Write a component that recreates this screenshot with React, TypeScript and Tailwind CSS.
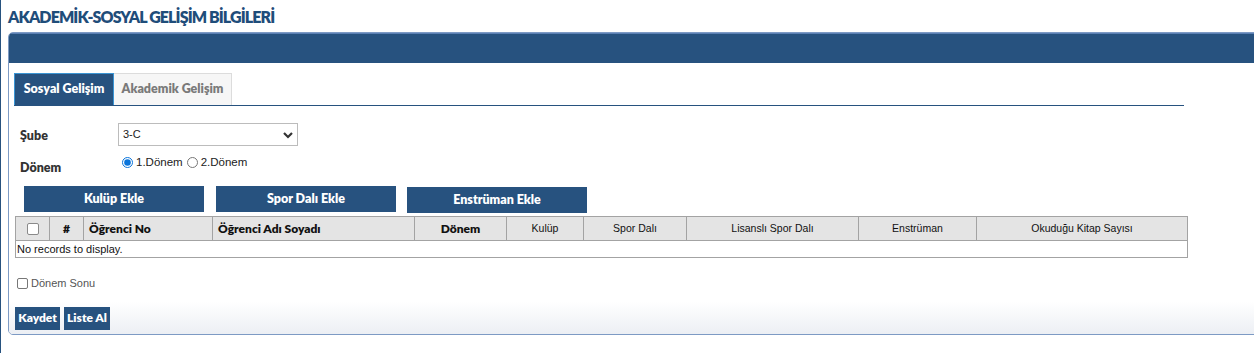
const cols = [
  { label: '#', w: 34, bold: true, align: 'center' },
  { label: 'Öğrenci No', w: 129, bold: true, align: 'left' },
  { label: 'Öğrenci Adı Soyadı', w: 202, bold: true, align: 'left' },
  { label: 'Dönem', w: 92, bold: true, align: 'center' },
  { label: 'Kulüp', w: 77, bold: false, align: 'center' },
  { label: 'Spor Dalı', w: 103, bold: false, align: 'center' },
  { label: 'Lisanslı Spor Dalı', w: 172, bold: false, align: 'center' },
  { label: 'Enstrüman', w: 118, bold: false, align: 'center' },
  { label: 'Okuduğu Kitap Sayısı', w: 211, bold: false, align: 'center' },
]

const head = { fontFamily: '"Lato", "Noto Sans", sans-serif' }
const body = { fontFamily: '"Liberation Sans", Arial, sans-serif' }

function ActionButton({ children }: { children: string }) {
  return (
    <button
      className="w-[180px] h-[26px] bg-[#27527f] text-white text-[12.5px] font-extrabold"
      style={head}
    >
      {children}
    </button>
  )
}

export default function App() {
  return (
    <div className="min-h-screen w-full overflow-hidden bg-white border-l border-[#27527f]">
      <h1
        className="h-[32px] pl-[7px] pt-[5px] text-[16px] font-extrabold text-[#1f4d7a] tracking-[-0.9px]"
        style={head}
      >
        AKADEMİK-SOSYAL GELİŞİM BİLGİLERİ
      </h1>

      <div className="ml-[7px] w-[1270px] border border-[#7d9ac4] rounded-[5px] overflow-hidden bg-white">
        <div className="h-[30px] bg-[#27527f] border-t border-[#5b80b4]" />

        <div className="pl-[5px] pt-[10px] bg-gradient-to-b from-white from-[88%] to-[#eceff4]">
          {/* tabs */}
          <div className="flex w-[1170px] border-b border-[#27527f]">
            <button
              className="w-[100px] h-[32px] bg-[#27527f] border border-[#3a95d4] border-b-0 text-white text-[12.5px] font-extrabold"
              style={head}
            >
              Sosyal Gelişim
            </button>
            <button
              className="w-[118px] h-[32px] bg-[#f6f6f6] border border-[#dcdcdc] border-b-0 border-l-0 text-[#7a7a7a] text-[12.5px] font-extrabold"
              style={head}
            >
              Akademik Gelişim
            </button>
          </div>

          {/* form */}
          <div className="mt-[17px] flex items-center">
            <span className="w-[104px] pl-[6px] pt-[4px] text-[12.5px] font-extrabold text-[#333]" style={head}>
              Şube
            </span>
            <div className="relative w-[180px] h-[23px] border border-[#bcbcbc] flex items-center pl-[4px] text-[11px] text-[#222]" style={body}>
              3-C
              <svg
                className="absolute right-[3px] top-[6px]"
                width="12"
                height="10"
                viewBox="0 0 12 10"
              >
                <path d="M2 3 L6 7 L10 3" fill="none" stroke="#333" strokeWidth="2.2" />
              </svg>
            </div>
          </div>

          <div className="mt-[8px] flex items-start h-[32px]">
            <span className="w-[108px] pl-[6px] pt-[5px] text-[12.5px] font-extrabold text-[#333]" style={head}>
              Dönem
            </span>
            <label className="flex items-center text-[11.5px] text-[#222]" style={body}>
              <input type="radio" name="donem" defaultChecked className="w-[11px] h-[11px] m-0 mr-[3px] accent-[#0a74da]" />
              1.Dönem
            </label>
            <label className="flex items-center ml-[4px] text-[11.5px] text-[#222]" style={body}>
              <input type="radio" name="donem" className="w-[11px] h-[11px] m-0 mr-[3px]" />
              2.Dönem
            </label>
          </div>

          {/* action buttons */}
          <div className="flex gap-[12px] ml-[10px]">
            <ActionButton>Kulüp Ekle</ActionButton>
            <ActionButton>Spor Dalı Ekle</ActionButton>
            <div className="-ml-[1px]">
              <ActionButton>Enstrüman Ekle</ActionButton>
            </div>
          </div>

          {/* grid */}
          <table className="ml-[1px] mt-[3px] border-collapse border border-[#a3a3a3] w-[1172px] table-fixed">
            <thead>
              <tr className="h-[24px] bg-[#e4e4e4]">
                <th className="w-[34px] border border-[#a3a3a3]">
                  <span className="block mx-auto w-[12px] h-[12px] border border-[#8a8a8a] rounded-[2px] bg-white" />
                </th>
                {cols.map((c) => (
                  <th
                    key={c.label}
                    className={`border border-[#a3a3a3] text-[#111] px-[5px] ${
                      c.bold ? 'font-extrabold text-[12px]' : 'font-normal text-[10.5px]'
                    } ${c.align === 'left' ? 'text-left' : 'text-center'}`}
                    style={{ width: c.w, ...(c.bold ? head : body) }}
                  >
                    {c.label}
                  </th>
                ))}
              </tr>
            </thead>
            <tbody>
              <tr className="h-[17px]">
                <td colSpan={10} className="px-[1px] text-[11px] text-[#111] leading-[16px]" style={body}>
                  No records to display.
                </td>
              </tr>
            </tbody>
          </table>

          <label className="mt-[17px] ml-[3px] flex items-center text-[11px] text-[#555]" style={body}>
            <span className="w-[11px] h-[11px] border border-[#777] rounded-[2px] mr-[3px]" />
            Dönem Sonu
          </label>

          <div className="flex gap-[4px] mt-[15px] ml-[1px] pb-[4px]">
            <button className="h-[23px] w-[45px] bg-[#27527f] text-white text-[12px] font-extrabold" style={head}>
              Kaydet
            </button>
            <button className="h-[23px] w-[46px] bg-[#27527f] text-white text-[12px] font-extrabold" style={head}>
              Liste Al
            </button>
          </div>
        </div>
      </div>
    </div>
  )
}
